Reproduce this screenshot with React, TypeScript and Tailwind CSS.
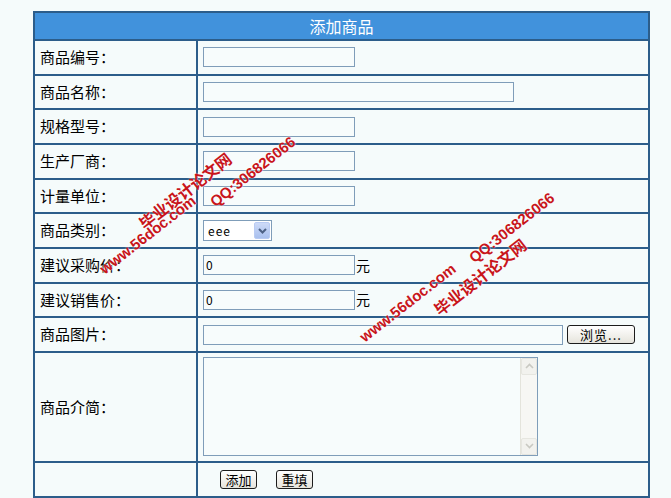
import React from 'react';

const font = { fontFamily: '"Noto Sans CJK SC", "DejaVu Sans", sans-serif' };

const Label = ({ children }: { children: React.ReactNode }) => (
  <div className="w-[163px] shrink-0 border-r-2 border-[#2c5d8a] pl-[5px] flex items-center text-[15px] text-black">
    {children}
  </div>
);

const Row = ({ label, children, h = 'h-[34.67px]' }: { label: React.ReactNode; children?: React.ReactNode; h?: string }) => (
  <div className={`flex border-t-2 border-[#2c5d8a] ${h}`}>
    <Label>{label}</Label>
    <div className="flex-1 flex items-center pl-[5px]">{children}</div>
  </div>
);

const TextBox = ({ w = 'w-[152px]', value = '' }: { w?: string; value?: string }) => (
  <div className={`${w} h-[20px] border border-[#7f9db9] bg-[#f7fcfc] flex items-center px-[2px] text-[12px] text-black`}>
    {value}
  </div>
);

const XpButton = ({ children, w }: { children: React.ReactNode; w: string }) => (
  <div className={`${w} h-[19px] rounded-[3px] border border-[#1c1c1c] bg-gradient-to-b from-white to-[#e6e4dc] flex items-center justify-center text-[13px] text-black leading-none`}>
    {children}
  </div>
);

const Mark = ({ cls, text, size }: { cls: string; text: string; size: string }) => (
  <div
    className={`absolute ${cls} -translate-x-1/2 -translate-y-1/2 rotate-[-38deg] whitespace-nowrap font-bold text-[#c8151b] ${size} pointer-events-none`}
    style={{ fontFamily: '"Liberation Sans", "Noto Sans CJK SC", sans-serif', textShadow: '0 0 2px #fff' }}
  >
    {text}
  </div>
);

export default function App() {
  return (
    <div className="relative w-[671px] h-[498px] bg-[#f5fbfb] overflow-hidden" style={font}>
      <div className="ml-[33px] pt-[11px] w-[617px]">
        <div className="border-2 border-[#2c5d8a]">
          <div className="h-[26px] bg-[#4192dc] text-white text-[16px] flex items-center justify-center">添加商品</div>

          <Row label="商品编号：">
            <TextBox />
          </Row>
          <Row label="商品名称：">
            <TextBox w="w-[311px]" />
          </Row>
          <Row label="规格型号：">
            <TextBox />
          </Row>
          <Row label="生产厂商：">
            <TextBox />
          </Row>
          <Row label="计量单位：">
            <TextBox />
          </Row>
          <Row label="商品类别：">
            <div className="w-[69px] h-[21px] border border-[#7f9db9] bg-white flex items-center">
              <span className="flex-1 pl-[4px] text-[12px] text-black tracking-[1px]">eee</span>
              <div className="w-[16px] h-[17px] mr-[1px] rounded-[2px] bg-gradient-to-b from-[#cddaf7] to-[#a9c0ee] border border-[#b9cbf3] flex items-center justify-center">
                <svg width="9" height="6" viewBox="0 0 9 6">
                  <path d="M1 1 L4.5 4.5 L8 1" fill="none" stroke="#4d6185" strokeWidth="2" />
                </svg>
              </div>
            </div>
          </Row>
          <Row label="建议采购价：">
            <TextBox value="0" />
            <span className="ml-[1px] text-[14px] text-black">元</span>
          </Row>
          <Row label="建议销售价：">
            <TextBox value="0" />
            <span className="ml-[1px] text-[14px] text-black">元</span>
          </Row>
          <Row label="商品图片：">
            <TextBox w="w-[360px]" />
            <div className="ml-[4px]">
              <XpButton w="w-[68px]">
                <span className="tracking-[1px]">浏览...</span>
              </XpButton>
            </div>
          </Row>
          <div className="flex border-t-2 border-[#2c5d8a] h-[110px]">
            <Label>商品介简：</Label>
            <div className="flex-1 pl-[5px] pt-[4px]">
              <div className="w-[335px] h-[99px] border border-[#7f9db9] bg-[#f7fcfc] flex justify-end">
                <div className="w-[17px] h-full bg-[#f7f7f4] border-l border-[#e4e4dc] flex flex-col justify-between">
                  <div className="h-[17px] border border-[#e6e6e0] rounded-[2px] bg-[#f2f2ee] flex items-center justify-center">
                    <svg width="9" height="6" viewBox="0 0 9 6">
                      <path d="M1 5 L4.5 1.5 L8 5" fill="none" stroke="#c9c9c2" strokeWidth="1.6" />
                    </svg>
                  </div>
                  <div className="h-[17px] border border-[#e6e6e0] rounded-[2px] bg-[#f2f2ee] flex items-center justify-center">
                    <svg width="9" height="6" viewBox="0 0 9 6">
                      <path d="M1 1 L4.5 4.5 L8 1" fill="none" stroke="#c9c9c2" strokeWidth="1.6" />
                    </svg>
                  </div>
                </div>
              </div>
            </div>
          </div>
          <div className="flex border-t-2 border-[#2c5d8a] h-[35px]">
            <Label>{''}</Label>
            <div className="flex-1 flex items-center pl-[22px] gap-[19px]">
              <XpButton w="w-[37px]">添加</XpButton>
              <XpButton w="w-[37px]">重填</XpButton>
            </div>
          </div>
        </div>
      </div>

      <Mark cls="left-[186px] top-[192px]" text="毕业设计论文网" size="text-[16px]" />
      <Mark cls="left-[148px] top-[235px]" text="www.56doc.com" size="text-[15px]" />
      <Mark cls="left-[253px] top-[172px]" text="QQ:306826066" size="text-[15px] font-semibold" />
      <Mark cls="left-[408px] top-[303px]" text="www.56doc.com" size="text-[15px]" />
      <Mark cls="left-[481px] top-[278px]" text="毕业设计论文网" size="text-[16px]" />
      <Mark cls="left-[512px] top-[228px]" text="QQ:306826066" size="text-[15px] font-semibold" />
    </div>
  );
}
